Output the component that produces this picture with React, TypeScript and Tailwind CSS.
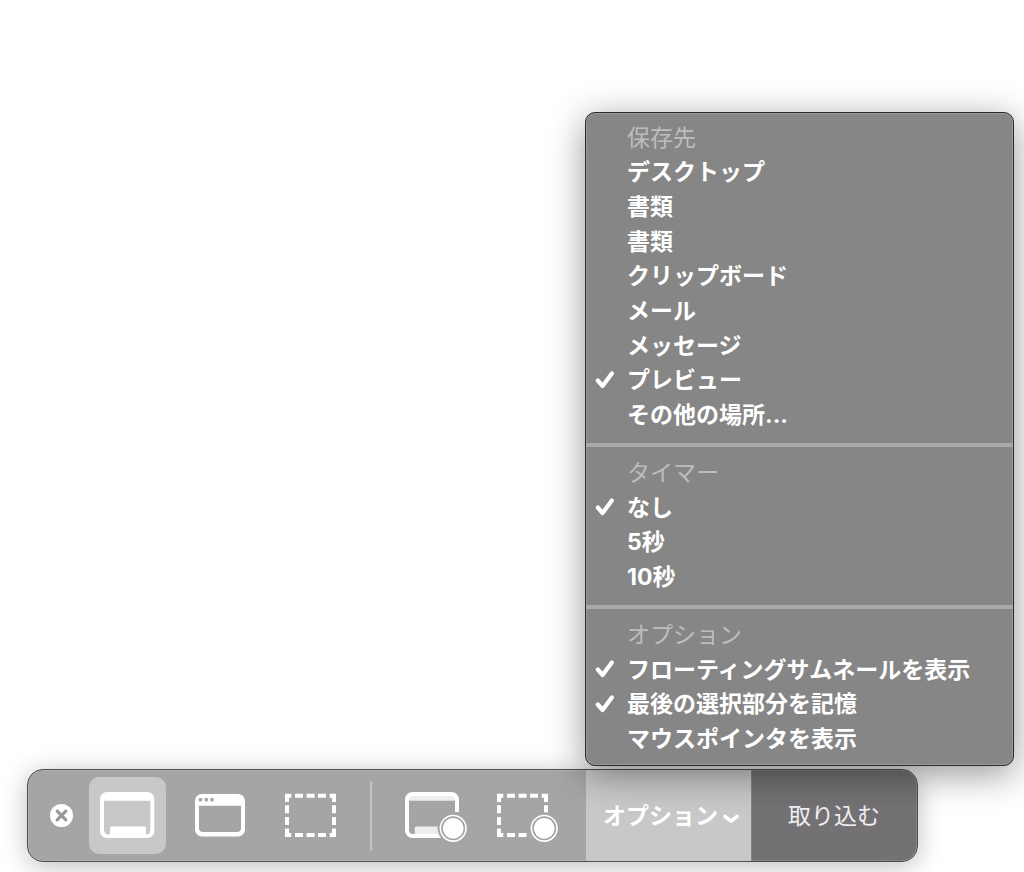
import { useState } from 'react';

type Item = {
  id: string;
  label: string;
};

type GroupProps = {
  title: string;
  items: Item[];
  checked: string[];
  className: string;
  onSelect: (id: string) => void;
};

const destinations: Item[] = [
  { id: 'desktop', label: 'デスクトップ' },
  { id: 'documents', label: '書類' },
  { id: 'documents-2', label: '書類' },
  { id: 'clipboard', label: 'クリップボード' },
  { id: 'mail', label: 'メール' },
  { id: 'messages', label: 'メッセージ' },
  { id: 'preview', label: 'プレビュー' },
  { id: 'other', label: 'その他の場所...' },
];

const timers: Item[] = [
  { id: 'none', label: 'なし' },
  { id: '5', label: '5秒' },
  { id: '10', label: '10秒' },
];

const toggles: Item[] = [
  { id: 'thumbnail', label: 'フローティングサムネールを表示' },
  { id: 'remember', label: '最後の選択部分を記憶' },
  { id: 'pointer', label: 'マウスポインタを表示' },
];

const Group = ({ title, items, checked, className, onSelect }: GroupProps) => (
  <div role="group" aria-label={title} className={`grid auto-rows-fr ${className}`}>
    <div className="flex items-center pl-[41px] text-[#bdbdbd]">{title}</div>
    {items.map((item) => (
      <button
        key={item.id}
        type="button"
        role="menuitemcheckbox"
        aria-checked={checked.includes(item.id)}
        className="flex items-center text-left font-bold text-white"
        onClick={() => onSelect(item.id)}
      >
        <span className="w-[41px] shrink-0 pl-[9px]">
          {checked.includes(item.id) && (
            <svg width="20" height="20" viewBox="0 0 20 20" fill="none" aria-hidden="true">
              <path d="M2.8 9.5 7.6 15 16.8 2.5" stroke="#fff" strokeWidth="4.2" strokeLinecap="round" strokeLinejoin="round" />
            </svg>
          )}
        </span>
        {item.label}
      </button>
    ))}
  </div>
);

const ScreenIcon = () => (
  <svg viewBox="0 0 77 77" className="size-full" aria-hidden="true">
    <path
      fill="#fff"
      fillRule="evenodd"
      d="M18 15H58.3a7 7 0 0 1 7 7V54a7 7 0 0 1-7 7H18a7 7 0 0 1-7-7V22a7 7 0 0 1 7-7ZM15 23.7V53a4.5 4.5 0 0 0 4.5 4.5H21V51a1.5 1.5 0 0 1 1.5-1.5h33A1.5 1.5 0 0 1 57 51v6.5a4.5 4.5 0 0 0 4.3-4.5V23.7Z"
    />
  </svg>
);

const WindowIcon = () => (
  <svg viewBox="0 0 77 77" className="size-full" aria-hidden="true">
    <path
      fill="#fff"
      fillRule="evenodd"
      d="M22 17H58a7 7 0 0 1 7 7V52.5a7 7 0 0 1-7 7H22a7 7 0 0 1-7-7V24a7 7 0 0 1 7-7ZM19 28.7V51a4 4 0 0 0 4 4H57a4 4 0 0 0 4-4V28.7Z"
    />
    <g fill="#a5a5a5">
      <circle cx="20.5" cy="22.7" r="1.9" />
      <circle cx="26.3" cy="22.7" r="1.9" />
      <circle cx="32.1" cy="22.7" r="1.9" />
    </g>
  </svg>
);

const Dashes = () => (
  <path
    fill="none"
    stroke="#fff"
    strokeWidth="4"
    d="M16 25V18.7H20.3M24 18.7h8M35.6 18.7h8M47 18.7h8M58.7 18.7H63V25M63 28.3v8M63 40v8M63 51.5V58H58.7M55 58h-8M43.6 58h-8M32 58h-8M20.3 58H16V51.5M16 48v-8M16 36.3v-8"
  />
);

const RecordDot = () => (
  <>
    <circle cx="59.2" cy="51.3" r="12.8" fill="none" stroke="#fff" strokeWidth="1.6" />
    <circle cx="59.2" cy="51.3" r="10.4" fill="#fff" />
  </>
);

const SelectionIcon = () => (
  <svg viewBox="0 0 77 77" className="size-full" aria-hidden="true">
    <Dashes />
  </svg>
);

const RecordScreenIcon = () => (
  <svg viewBox="0 0 77 77" className="size-full" aria-hidden="true">
    <mask id="screen-cut">
      <rect width="77" height="77" fill="#fff" />
      <circle cx="59.2" cy="51.3" r="15.6" fill="#000" />
      <rect x="59" y="35" width="8" height="4" fill="#000" />
    </mask>
    <g mask="url(#screen-cut)">
      <path d="M14 18H62V23.7H14Z" fill="#eee" />
      <path d="M20.7 59V51a1.5 1.5 0 0 1 1.5-1.5H50V59Z" fill="#eee" />
      <path d="M20.7 57.5h-1.5A4.5 4.5 0 0 1 15 53v6h5.7Z" fill="#fff" />
      <rect x="13" y="17" width="50" height="42" rx="5.5" fill="none" stroke="#fff" strokeWidth="4" />
    </g>
    <RecordDot />
  </svg>
);

const RecordSelectionIcon = () => (
  <svg viewBox="0 0 77 77" className="size-full" aria-hidden="true">
    <mask id="selection-cut">
      <rect width="77" height="77" fill="#fff" />
      <circle cx="59.2" cy="51.3" r="16" fill="#000" />
    </mask>
    <g mask="url(#selection-cut)">
      <g transform="translate(-2 0)">
        <Dashes />
      </g>
    </g>
    <RecordDot />
  </svg>
);

const captureTools = [
  { id: 'screen', label: '画面全体を取り込む', Icon: ScreenIcon },
  { id: 'window', label: '選択したウインドウを取り込む', Icon: WindowIcon },
  { id: 'selection', label: '選択部分を取り込む', Icon: SelectionIcon },
];

const recordTools = [
  { id: 'record-screen', label: '画面全体を収録', Icon: RecordScreenIcon },
  { id: 'record-selection', label: '選択部分を収録', Icon: RecordSelectionIcon },
];

const App = () => {
  const [tool, setTool] = useState('screen');
  const [destination, setDestination] = useState('preview');
  const [timer, setTimer] = useState('none');
  const [enabled, setEnabled] = useState(['thumbnail', 'remember']);
  const [open, setOpen] = useState(true);

  const toggle = (id: string) =>
    setEnabled((prev) => (prev.includes(id) ? prev.filter((value) => value !== id) : [...prev, id]));

  const renderTool = ({ id, label, Icon }: (typeof captureTools)[number]) => (
    <button
      key={id}
      type="button"
      aria-label={label}
      aria-pressed={tool === id}
      className={`size-[77px] shrink-0 rounded-[10px] ${tool === id ? 'bg-[#c8c8c8]' : ''}`}
      onClick={() => setTool(id)}
    >
      <Icon />
    </button>
  );

  return (
    <main
      lang="ja"
      className="flex min-h-screen flex-col justify-end gap-[3px] overflow-hidden bg-white pr-[10px] pb-[10px] pl-[27px] font-['Inter','Noto_Sans_CJK_JP',sans-serif] text-[23px] leading-none"
    >
      {open && (
        <div
          role="menu"
          className="z-10 w-[429px] self-end rounded-[10px] border border-[#2b2b2b] bg-[#868686] py-2 shadow-[inset_0_0_0_1px_#9a9a9a,0_8px_36px_rgba(0,0,0,0.42)]"
        >
          <Group
            title="保存先"
            items={destinations}
            checked={[destination]}
            className="h-[312px]"
            onSelect={setDestination}
          />
          <div role="separator" className="mt-[10px] mb-[9px] h-1 bg-[#aaaaaa]" />
          <Group title="タイマー" items={timers} checked={[timer]} className="h-[139px]" onSelect={setTimer} />
          <div role="separator" className="mt-[10px] mb-[9px] h-1 bg-[#aaaaaa]" />
          <Group title="オプション" items={toggles} checked={enabled} className="h-[139px]" onSelect={toggle} />
        </div>
      )}

      <div
        role="toolbar"
        className="mr-24 flex h-[93px] items-center overflow-hidden rounded-[16px] border border-[#4f4f4f] bg-[#a5a5a5] shadow-[inset_0_0_0_1px_#b2b2b2,0_4px_26px_rgba(0,0,0,0.26)]"
      >
        <button type="button" aria-label="閉じる" className="ml-[22px] size-6 shrink-0">
          <svg viewBox="0 0 24 24" className="size-full" aria-hidden="true">
            <circle cx="11.5" cy="11.5" r="11.5" fill="#fff" />
            <path d="M7.2 7.2l8.6 8.6M15.8 7.2l-8.6 8.6" stroke="#999" strokeWidth="3.2" strokeLinecap="round" />
          </svg>
        </button>
        <div className="ml-[15px] flex gap-[14px]">{captureTools.map(renderTool)}</div>
        <div className="mx-[22px] h-[70px] w-[2px] shrink-0 bg-[#c4c4c4]" />
        <div className="flex gap-[14px]">{recordTools.map(renderTool)}</div>
        <button
          type="button"
          aria-expanded={open}
          className="ml-6 flex h-full w-[165px] shrink-0 items-center justify-center gap-1 bg-[#c8c8c8] pt-[2px] pl-[6px] font-bold text-white"
          onClick={() => setOpen(!open)}
        >
          オプション
          <svg width="18" height="12" viewBox="0 0 18 12" fill="none" className="mt-1" aria-hidden="true">
            <path d="M3 3.5 9 8.2 15 3.5" stroke="#fff" strokeWidth="3.6" strokeLinecap="round" strokeLinejoin="round" />
          </svg>
        </button>
        <button
          type="button"
          className="h-full flex-1 rounded-r-[15px] border border-[#858385] bg-[#747174] pt-[2px] text-[#f0eef0]"
        >
          取り込む
        </button>
      </div>
    </main>
  );
};

export default App;
